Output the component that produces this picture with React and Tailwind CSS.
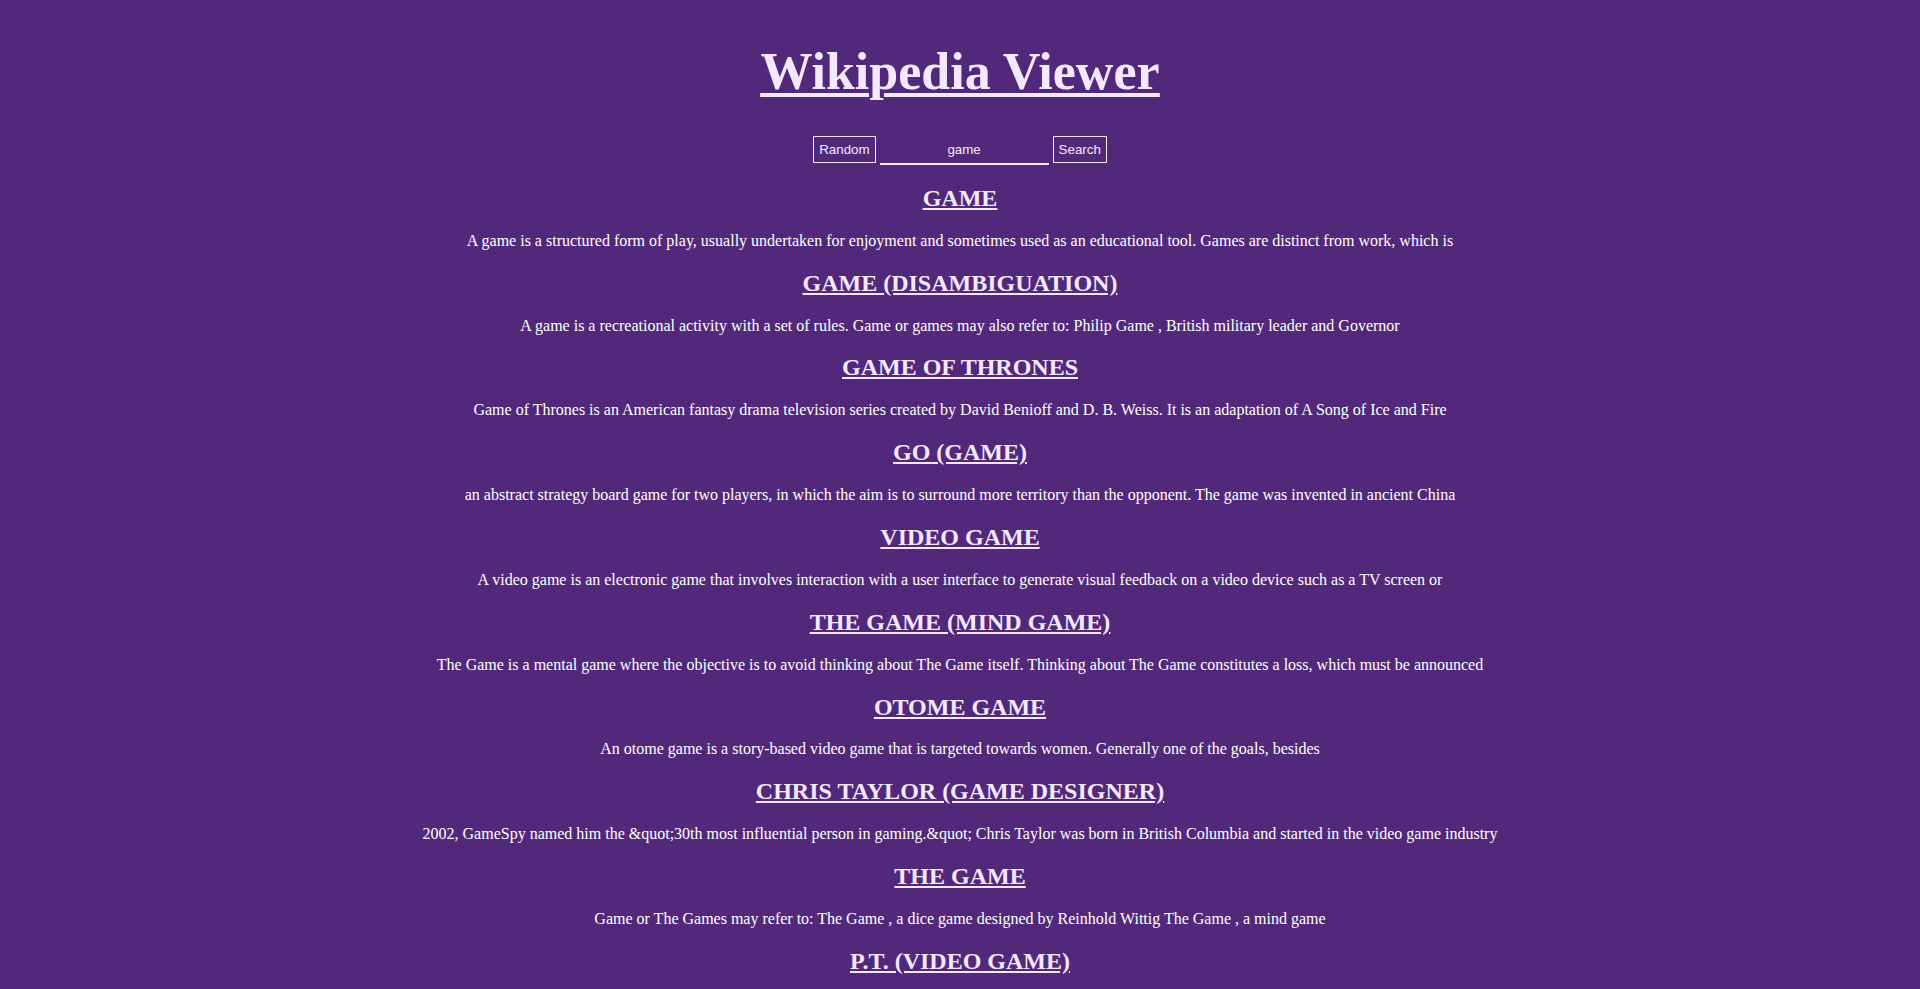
import { useState } from 'react'

const results = [
  {
    title: 'Game',
    snippet:
      'A game is a structured form of play, usually undertaken for enjoyment and sometimes used as an educational tool. Games are distinct from work, which is',
  },
  {
    title: 'Game (disambiguation)',
    snippet:
      'A game is a recreational activity with a set of rules. Game or games may also refer to: Philip Game , British military leader and Governor',
  },
  {
    title: 'Game of Thrones',
    snippet:
      'Game of Thrones is an American fantasy drama television series created by David Benioff and D. B. Weiss. It is an adaptation of A Song of Ice and Fire',
  },
  {
    title: 'Go (game)',
    snippet:
      'an abstract strategy board game for two players, in which the aim is to surround more territory than the opponent. The game was invented in ancient China',
  },
  {
    title: 'Video game',
    snippet:
      'A video game is an electronic game that involves interaction with a user interface to generate visual feedback on a video device such as a TV screen or',
  },
  {
    title: 'The Game (mind game)',
    snippet:
      'The Game is a mental game where the objective is to avoid thinking about The Game itself. Thinking about The Game constitutes a loss, which must be announced',
  },
  {
    title: 'Otome game',
    snippet:
      'An otome game is a story-based video game that is targeted towards women. Generally one of the goals, besides',
  },
  {
    title: 'Chris Taylor (game designer)',
    snippet:
      '2002, GameSpy named him the &quot;30th most influential person in gaming.&quot; Chris Taylor was born in British Columbia and started in the video game industry',
  },
  {
    title: 'The Game',
    snippet:
      'Game or The Games may refer to: The Game , a dice game designed by Reinhold Wittig The Game , a mind game',
  },
  {
    title: 'P.T. (video game)',
    snippet:
      'P.T. (an initialism for &quot;playable teaser&quot;) is a psychological horror game developed by 7780s Studio and published by Konami',
  },
]

export default function App() {
  const [query, setQuery] = useState('game')

  return (
    <div className="min-h-screen bg-[#52297a] pt-[43px] pb-10 text-center font-['Liberation_Serif','Times_New_Roman',serif] text-[#f3e8ff]">
      <h1 className="text-[52px] font-bold leading-[58px] underline decoration-[4px] underline-offset-[4px]">
        <a href="#">Wikipedia Viewer</a>
      </h1>

      <div className="mt-[35px] flex h-[29px] items-start justify-center gap-[4px] font-['Liberation_Sans',Arial,sans-serif] text-[13.33px]">
        <button className="h-[27px] border border-[#f3e8ff] bg-transparent px-[5px] leading-[25px] text-[#f3e8ff]">
          Random
        </button>
        <input
          value={query}
          onChange={(e) => setQuery(e.target.value)}
          className="h-[29px] w-[169px] border-b-2 border-[#f3e8ff] bg-transparent text-center text-[#f3e8ff] outline-none"
        />
        <button className="h-[27px] border border-[#f3e8ff] bg-transparent px-[5px] leading-[25px] text-[#f3e8ff]">
          Search
        </button>
      </div>

      <div className="mt-[1px]">
        {results.map((r) => (
          <div key={r.title}>
            <h2 className="my-[19.9px] text-2xl font-bold uppercase leading-[27px]">
              <a href="#" className="underline underline-offset-[2px]">
                {r.title}
              </a>
            </h2>
            <p className="text-base leading-[18px] text-white">{r.snippet}</p>
          </div>
        ))}
      </div>
    </div>
  )
}
